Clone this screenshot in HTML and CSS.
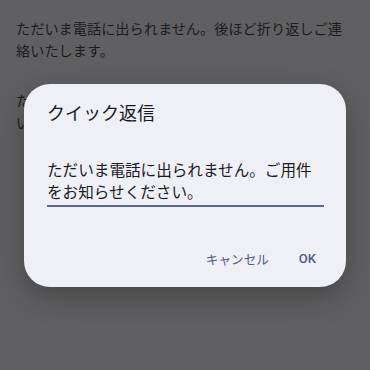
FILE: index.html
```html
<!DOCTYPE html>
<html lang="ja">
<head>
<meta charset="utf-8">
<link rel="stylesheet" href="styles.css">
</head>
<body>
<div class="list">
  <p class="reply">ただいま電話に出られません。後ほど折り返しご連絡いたします。</p>
  <p class="reply">ただいま電話に出られません。すぐに折り返し電話いたします。</p>
</div>
<div class="overlay">
  <div class="dialog">
    <div class="title">クイック返信</div>
    <div class="field">ただいま電話に出られません。ご用件をお知らせください。</div>
    <div class="actions">
      <span class="btn cancel">キャンセル</span>
      <span class="btn ok">OK</span>
    </div>
  </div>
</div>
</body>
</html>
```

FILE: styles.css
```css
html, body {
  margin: 0;
  padding: 0;
  width: 370px;
  height: 370px;
  overflow: hidden;
  background: #606062;
  font-family: "Noto Sans CJK JP", "Noto Sans", sans-serif;
}

.list {
  display: flex;
  flex-direction: column;
  gap: 28px;
  padding: 17px 16px 0 16px;
}

.reply {
  margin: 0;
  font-size: 14.2px;
  line-height: 22px;
  color: #1c1c1e;
}

.overlay {
  position: absolute;
  inset: 0;
  display: flex;
  align-items: center;
  justify-content: center;
}

.dialog {
  width: 322px;
  box-sizing: border-box;
  background: #efeff6;
  border-radius: 26px;
  padding: 16px 22px 18px 23px;
  box-shadow: 0 10px 28px rgba(0, 0, 0, 0.28);
  display: flex;
  flex-direction: column;
}

.title {
  font-size: 18px;
  line-height: 24px;
  color: #1b1b1f;
}

.field {
  margin-top: 34px;
  font-size: 15.6px;
  line-height: 22px;
  color: #1b1b1f;
  padding-bottom: 3px;
  border-bottom: 2px solid #5a6896;
}

.actions {
  margin-top: 42px;
  display: flex;
  justify-content: flex-end;
  gap: 30px;
  padding-right: 8px;
}

.btn {
  font-size: 12.6px;
  line-height: 20px;
  color: #4f5a86;
}

.ok {
  font-family: "Roboto", "Noto Sans", sans-serif;
  font-weight: 500;
  font-size: 13px;
}
```
